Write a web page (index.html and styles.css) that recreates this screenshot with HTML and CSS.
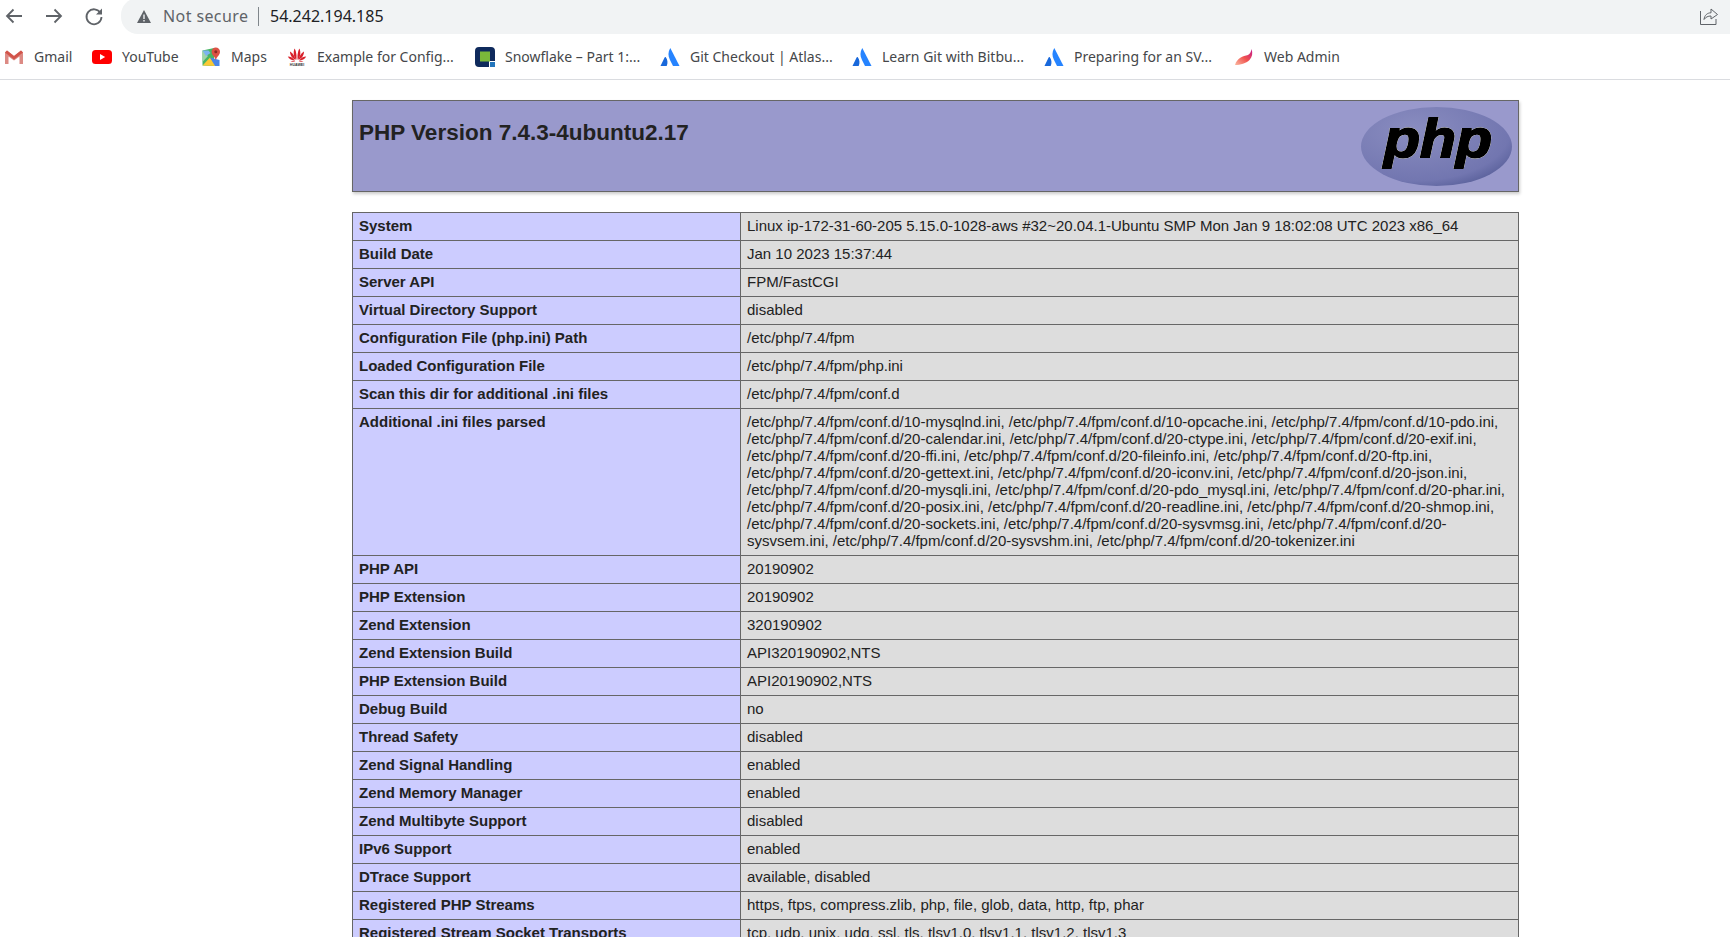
FILE: index.html
```html
<!DOCTYPE html>
<html lang="en">
<head>
<meta charset="utf-8">
<title>phpinfo()</title>
<link rel="stylesheet" href="styles.css">
</head>
<body>
<div class="browser">
  <div class="toolbar">
    <nav class="nav">
      <svg class="nav-icon" viewBox="0 0 24 24"><path d="M20 12H5M11.5 5.5 5 12l6.500 6.500"/></svg>
      <svg class="nav-icon" viewBox="0 0 24 24"><path d="M4 12h15M12.500 5.500 19 12l-6.500 6.500"/></svg>
      <svg class="nav-icon" viewBox="0 0 24 24"><path d="M18.500 9A7.500 7.500 0 1 0 19.500 13"/><path class="fill" d="M20 4.500V10.500H14z"/></svg>
    </nav>
    <div class="omnibox">
      <svg class="warn" viewBox="0 0 14 13"><path d="M7 0 14 13H0z"/><rect x="6.300" y="4.500" width="1.400" height="4.500" fill="#f1f3f4"/><rect x="6.300" y="10" width="1.400" height="1.500" fill="#f1f3f4"/></svg>
      <span class="not-secure">Not secure</span>
      <span class="sep"></span>
      <span class="url">54.242.194.185</span>
      <svg class="share" viewBox="0 0 20 20"><path d="M1.500 5V18.500H17V13"/><path d="M5 13.500C5.500 9 8.500 6.800 12 6.800V3L18.500 8.500 12 13V10C9 10 6.800 11 5 13.500Z"/></svg>
    </div>
  </div>
  <div class="bookmarks">
    <a class="bm">
      <svg class="bm-icon" viewBox="0 0 20 20"><path d="M1 5.500V17h3.500V9.500L10 13.500l5.500-4V17H19V5.500L17 3.500 10 9 3 3.500z" fill="#dc8a84"/><path d="M1 5.500 3 3.500 10 9 17 3.500 19 5.500 10 12.500z" fill="#d2544a"/></svg>
      <span>Gmail</span>
    </a>
    <a class="bm">
      <svg class="bm-icon" viewBox="0 0 20 20"><rect y="3" width="20" height="14" rx="3.500" fill="#f00"/><path d="M8 7l5.200 3L8 13z" fill="#fff"/></svg>
      <span>YouTube</span>
    </a>
    <a class="bm">
      <svg class="bm-icon" viewBox="0 0 20 20"><path d="M1.500 3.500 13 1v18L1.500 18.500z" fill="#48b564"/><path d="M1.500 18.500 9 10.500 15 19z" fill="#fcc934"/><path d="M1.500 3.500 7 9 1.500 15z" fill="#9fd3a8"/><path d="M1.500 3.500h6L9.500 6 5 9z" fill="#7cb3f0"/><path d="M9 10.500 14 19h4.500V13z" fill="#4a86e8"/><path d="M14.800 .5a4.200 4.200 0 0 1 4.200 4.200c0 3.300-3.300 5-4.200 8.300-.9-3.300-4.200-5-4.200-8.300a4.200 4.200 0 0 1 4.200-4.200z" fill="#dd5144"/><circle cx="14.800" cy="4.700" r="1.500" fill="#8c2a22"/></svg>
      <span>Maps</span>
    </a>
    <a class="bm">
      <svg class="bm-icon" viewBox="0 0 20 20"><g fill="#d8202a"><path d="M9.300 13C6.500 10 6 5.500 7.500 1.500 8.800 3 10 8 9.300 13z"/><path d="M10.700 13C13.500 10 14 5.500 12.500 1.500 11.200 3 10 8 10.700 13z"/><path d="M8.500 13C5.500 11.500 3 8.500 3 4.500 5 5.500 8 9 8.500 13z"/><path d="M11.500 13C14.500 11.500 17 8.500 17 4.500 15 5.500 12 9 11.500 13z"/><path d="M8 13.800C5 13.500 2 12 .8 9.500 3.500 9.500 6.500 11 8 13.800z"/><path d="M12 13.800C15 13.500 18 12 19.200 9.500 16.500 9.500 13.500 11 12 13.800z"/><path d="M8.500 14.800H3.500C4.500 14 7 13.800 8.500 14.800z"/><path d="M11.500 14.800H16.500C15.500 14 13 13.800 11.500 14.800z"/></g><text class="huawei" x="10" y="19.300" text-anchor="middle">HUAWEI</text></svg>
      <span>Example for Config...</span>
    </a>
    <a class="bm">
      <svg class="bm-icon" viewBox="0 0 20 20"><path d="M4 0h12a4 4 0 0 1 4 4v10h-6v6H4a4 4 0 0 1-4-4V4a4 4 0 0 1 4-4z" fill="#0f2a5c"/><rect x="5" y="4.500" width="10" height="10" fill="#7ab83a"/><rect x="15" y="15" width="5" height="5" fill="#2376bd"/></svg>
      <span>Snowflake – Part 1:...</span>
    </a>
    <a class="bm">
      <svg class="bm-icon" viewBox="0 0 20 20"><use href="#atlassian"/></svg>
      <span>Git Checkout | Atlas...</span>
    </a>
    <a class="bm">
      <svg class="bm-icon" viewBox="0 0 20 20"><use href="#atlassian"/></svg>
      <span>Learn Git with Bitbu...</span>
    </a>
    <a class="bm">
      <svg class="bm-icon" viewBox="0 0 20 20"><use href="#atlassian"/></svg>
      <span>Preparing for an SV...</span>
    </a>
    <a class="bm">
      <svg class="bm-icon" viewBox="0 0 20 20"><defs><linearGradient id="feather" x1="0" y1="1" x2="1" y2="0"><stop offset="0" stop-color="#fbb9a0"/><stop offset=".5" stop-color="#f0524f"/><stop offset="1" stop-color="#c2188b"/></linearGradient></defs><path d="M1 18C3 11 9 9 14 8c2-1 3-3 3.500-6 1.500 4 .8 8-2 11-3.500 3.500-9 5-14.500 5z" fill="url(#feather)"/></svg>
      <span>Web Admin</span>
    </a>
    <svg class="defs" viewBox="0 0 20 20"><symbol id="atlassian" viewBox="0 0 20 20"><path d="M10.300 1C7.800 5 8 9 10 13l3 6h6.500z" fill="#2684ff"/><path d="M5.800 10.300c-.4-.5-.9-.4-1.200.2L.5 19h6.200c1.300-2.800 1-6-.9-8.700z" fill="#1868db"/></symbol></svg>
  </div>
</div>

<main class="page">
  <header class="banner">
    <h1 class="title">PHP Version 7.4.3-4ubuntu2.17</h1>
    <svg class="logo" viewBox="0 0 151 79">
      <defs>
        <radialGradient id="oval" cx=".35" cy=".3" r=".85">
          <stop offset="0" stop-color="#8a8dc0"/>
          <stop offset=".75" stop-color="#7276b0"/>
          <stop offset="1" stop-color="#4d5590"/>
        </radialGradient>
      </defs>
      <ellipse cx="75.500" cy="39.500" rx="75.500" ry="39.500" fill="url(#oval)"/>
      <text class="logo-text" x="23" y="50" textLength="108" lengthAdjust="spacingAndGlyphs">php</text>
    </svg>
  </header>

  <table class="info">
    <colgroup><col class="col-e"><col class="col-v"></colgroup>
    <tbody>
      <tr><th>System</th><td>Linux ip-172-31-60-205 5.15.0-1028-aws #32~20.04.1-Ubuntu SMP Mon Jan 9 18:02:08 UTC 2023 x86_64</td></tr>
      <tr><th>Build Date</th><td>Jan 10 2023 15:37:44</td></tr>
      <tr><th>Server API</th><td>FPM/FastCGI</td></tr>
      <tr><th>Virtual Directory Support</th><td>disabled</td></tr>
      <tr><th>Configuration File (php.ini) Path</th><td>/etc/php/7.4/fpm</td></tr>
      <tr><th>Loaded Configuration File</th><td>/etc/php/7.4/fpm/php.ini</td></tr>
      <tr><th>Scan this dir for additional .ini files</th><td>/etc/php/7.4/fpm/conf.d</td></tr>
      <tr><th>Additional .ini files parsed</th><td>/etc/php/7.4/fpm/conf.d/10-mysqlnd.ini, /etc/php/7.4/fpm/conf.d/10-opcache.ini, /etc/php/7.4/fpm/conf.d/10-pdo.ini, /etc/php/7.4/fpm/conf.d/20-calendar.ini, /etc/php/7.4/fpm/conf.d/20-ctype.ini, /etc/php/7.4/fpm/conf.d/20-exif.ini, /etc/php/7.4/fpm/conf.d/20-ffi.ini, /etc/php/7.4/fpm/conf.d/20-fileinfo.ini, /etc/php/7.4/fpm/conf.d/20-ftp.ini, /etc/php/7.4/fpm/conf.d/20-gettext.ini, /etc/php/7.4/fpm/conf.d/20-iconv.ini, /etc/php/7.4/fpm/conf.d/20-json.ini, /etc/php/7.4/fpm/conf.d/20-mysqli.ini, /etc/php/7.4/fpm/conf.d/20-pdo_mysql.ini, /etc/php/7.4/fpm/conf.d/20-phar.ini, /etc/php/7.4/fpm/conf.d/20-posix.ini, /etc/php/7.4/fpm/conf.d/20-readline.ini, /etc/php/7.4/fpm/conf.d/20-shmop.ini, /etc/php/7.4/fpm/conf.d/20-sockets.ini, /etc/php/7.4/fpm/conf.d/20-sysvmsg.ini, /etc/php/7.4/fpm/conf.d/20-sysvsem.ini, /etc/php/7.4/fpm/conf.d/20-sysvshm.ini, /etc/php/7.4/fpm/conf.d/20-tokenizer.ini</td></tr>
      <tr><th>PHP API</th><td>20190902</td></tr>
      <tr><th>PHP Extension</th><td>20190902</td></tr>
      <tr><th>Zend Extension</th><td>320190902</td></tr>
      <tr><th>Zend Extension Build</th><td>API320190902,NTS</td></tr>
      <tr><th>PHP Extension Build</th><td>API20190902,NTS</td></tr>
      <tr><th>Debug Build</th><td>no</td></tr>
      <tr><th>Thread Safety</th><td>disabled</td></tr>
      <tr><th>Zend Signal Handling</th><td>enabled</td></tr>
      <tr><th>Zend Memory Manager</th><td>enabled</td></tr>
      <tr><th>Zend Multibyte Support</th><td>disabled</td></tr>
      <tr><th>IPv6 Support</th><td>enabled</td></tr>
      <tr><th>DTrace Support</th><td>available, disabled</td></tr>
      <tr><th>Registered PHP Streams</th><td>https, ftps, compress.zlib, php, file, glob, data, http, ftp, phar</td></tr>
      <tr><th>Registered Stream Socket Transports</th><td>tcp, udp, unix, udg, ssl, tls, tlsv1.0, tlsv1.1, tlsv1.2, tlsv1.3</td></tr>
    </tbody>
  </table>
</main>
</body>
</html>
```

FILE: styles.css
```css
html, body {
  margin: 0;
  height: 100%;
  overflow: hidden;
  background: #fff;
}

body {
  font-family: "Liberation Sans", Arial, sans-serif;
  color: #222;
}

.browser {
  font-family: "Noto Sans", "Open Sans", sans-serif;
  font-size: 14px;
  color: #45474a;
}

.toolbar {
  display: flex;
  height: 34px;
}

.nav {
  display: flex;
  gap: 16px;
  padding: 4px 0 0 2px;
  height: 30px;
}

.nav-icon {
  width: 24px;
  height: 24px;
  fill: none;
  stroke: #5f6368;
  stroke-width: 1.800;
}

.nav-icon .fill {
  fill: #5f6368;
  stroke: none;
}

.omnibox {
  flex: 1;
  margin-left: 15px;
  display: flex;
  align-items: center;
  padding-left: 16px;
  background: #f1f3f4;
  border-radius: 17px 0 0 17px;
  margin-top: -2px;
  height: 36px;
}

.warn {
  width: 14px;
  height: 13px;
  fill: #5f6368;
}

.not-secure {
  margin-left: 12px;
  width: 85px;
  font-size: 16px;
  letter-spacing: .4px;
  white-space: nowrap;
  color: #5f6368;
}

.sep {
  width: 1px;
  height: 19px;
  margin: 0 11px 0 10px;
  background: #80868b;
}

.url {
  font-size: 16px;
  white-space: nowrap;
  color: #202124;
}

.share {
  margin-left: auto;
  margin-right: 11px;
  width: 20px;
  height: 20px;
  fill: none;
  stroke: #5f6368;
  stroke-width: 1;
}

.bookmarks {
  display: grid;
  grid-template-columns: 88px 109px 86px 188px 185px 192px 192px 190px 100px;
  align-items: center;
  height: 45px;
  padding: 0 0 0 4px;
  border-bottom: 1px solid #dadce0;
}

.bm {
  display: flex;
  align-items: center;
  gap: 10px;
  white-space: nowrap;
}

.bm-icon {
  width: 20px;
  height: 20px;
  flex: none;
}

.defs {
  position: absolute;
  width: 0;
  height: 0;
}

.huawei {
  font-family: "Liberation Sans", sans-serif;
  font-size: 3.600px;
  font-weight: 700;
  fill: #333;
}

.page {
  width: 1167px;
  margin-left: 352px;
  padding-top: 20px;
}

.banner {
  display: flex;
  justify-content: space-between;
  box-sizing: border-box;
  height: 92px;
  padding: 6px 6px 0 6px;
  background: #9999cc;
  border: 1px solid #666;
  box-shadow: 1px 2px 3px #ccc;
}

.title {
  margin: 0;
  padding-top: 12px;
  font-size: 22.500px;
  line-height: 28px;
  font-weight: 700;
  color: #222;
}

.logo {
  width: 151px;
  height: 79px;
  overflow: visible;
}

.logo-text {
  font-family: "Liberation Sans", sans-serif;
  font-size: 54px;
  font-weight: 700;
  font-style: italic;
  fill: #000;
  stroke: #000;
  stroke-width: 2px;
  filter: drop-shadow(0 0 .7px #fff) drop-shadow(0 0 .7px #fff);
}

.info {
  table-layout: fixed;
  width: 1166px;
  margin-top: 20px;
  border-collapse: collapse;
  font-size: 15px;
  line-height: 17px;
}

.col-e {
  width: 388px;
}

.col-v {
  width: 778px;
}

.info th,
.info td {
  padding: 4px 6px 6px;
  border: 1px solid #666;
  vertical-align: baseline;
  text-align: left;
}

.info th {
  background: #ccccff;
  font-weight: 700;
}

.info td {
  background: #dddddd;
}
```
